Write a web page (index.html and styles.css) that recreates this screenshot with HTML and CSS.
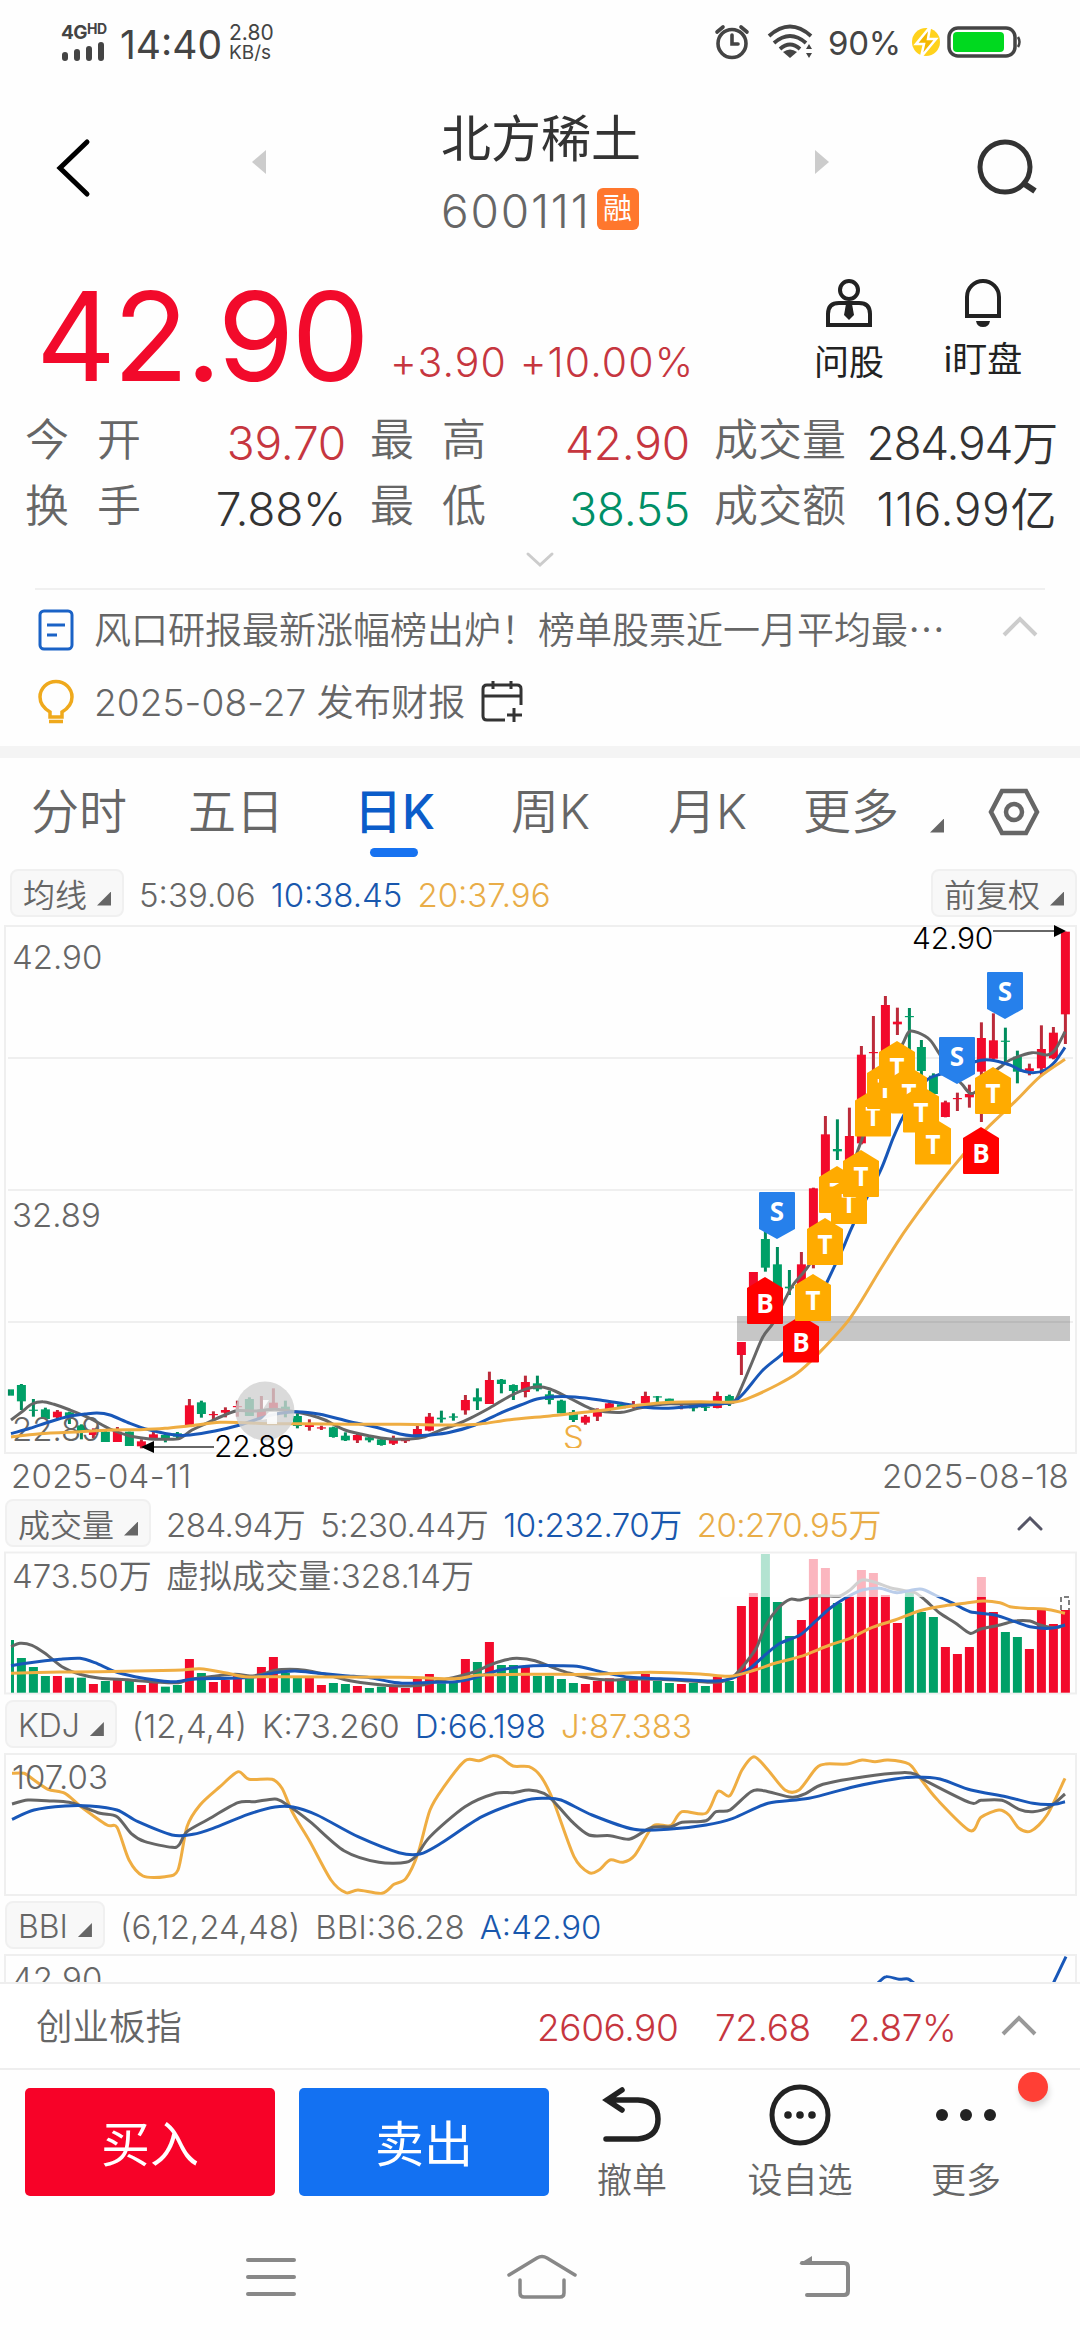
FILE: index.html
```html
<!DOCTYPE html>
<html lang="zh-CN">
<head>
    <meta charset="UTF-8">
    <meta name="viewport" content="width=device-width, initial-scale=1.0">
    <title>北方稀土 600111</title>
    <link rel="stylesheet" href="styles.css">
</head>
<body>
    <div class="status-bar">
        <div class="signal">
            <div class="network">4G<small>HD</small></div>
            <svg width="44" height="20" viewBox="0 0 44 20" stroke="#444" stroke-width="6" stroke-linecap="round"><path d="M4 13v3M16 10v6M28 7v9M40 3v13"/></svg>
        </div>
        <div class="clock">14:40</div>
        <div class="speed"><span>2.80</span><span>KB/s</span></div>
        <svg class="alarm" width="36" height="36" viewBox="0 0 36 36" fill="none" stroke="#444" stroke-width="3.6" stroke-linecap="round"><circle cx="18" cy="19.500" r="14"/><path d="M18 11v9h6M3 8l6-5M33 8l-6-5"/></svg>
        <svg class="wifi" width="48" height="36" viewBox="0 0 48 36" fill="none" stroke="#444" stroke-width="3.8"><path d="M2 12Q23-7 44 12M7 19q16-14 32 0M13 25q10-9 20 0"/><path d="M23 34l-7-6q7-5 14 0z" fill="#444" stroke="none"/><path d="M39 25l3-5 3 5zM39 29h6l-3 5z" fill="#444" stroke="none"/></svg>
        <div class="percent">90%</div>
        <svg class="bolt" width="32" height="32" viewBox="0 0 32 32"><circle cx="16" cy="16" r="14" fill="#ffd21c"/><path d="M20 1L6 18h8l-3 13 15-18h-8z" fill="#f5b800" stroke="#fff" stroke-width="2.500"/></svg>
        <svg class="battery" width="74" height="32" viewBox="0 0 74 32"><rect x="2" y="2" width="66" height="28" rx="9" fill="#fff" stroke="#444" stroke-width="3.500"/><rect x="6" y="6" width="51" height="20" rx="4" fill="#00d91f"/><path d="M71 11q3 5 0 10" fill="none" stroke="#444" stroke-width="2.500"/></svg>
    </div>

    <div class="header">
        <svg class="back" width="36" height="62" viewBox="0 0 36 62" fill="none" stroke="#000" stroke-width="5" stroke-linecap="round"><path d="M32 5L5 31l27 26"/></svg>
        <svg class="prev" width="14" height="24" viewBox="0 0 14 24" fill="#ccc"><path d="M14 0v24L0 12z"/></svg>
        <div class="stock">
            <div class="stock-name">北方稀土</div>
            <div class="stock-code">600111<span class="margin-tag">融</span></div>
        </div>
        <svg class="next" width="14" height="24" viewBox="0 0 14 24" fill="#ccc"><path d="M0 0v24l14-12z"/></svg>
        <svg class="search" width="62" height="58" viewBox="0 0 62 58" fill="none" stroke="#333" stroke-width="5"><circle cx="28" cy="28" r="25"/><path d="M46 44l12 8" stroke-width="6"/></svg>
    </div>

    <div class="quote">
        <div class="price">42.90</div>
        <div class="change">+3.90 +10.00%</div>
        <div class="action ask">
            <svg width="48" height="50" viewBox="0 0 48 50" fill="none" stroke="#222" stroke-width="4"><circle cx="24" cy="12" r="9"/><path d="M3 47V36q0-11 11-11h20q11 0 11 11v11z"/><path d="M21 26h6l2 11-5 5-5-5z" fill="#222" stroke="none"/></svg>
            <span>问股</span>
        </div>
        <div class="action watch">
            <svg width="40" height="50" viewBox="0 0 40 50" fill="none" stroke="#222" stroke-width="4"><path d="M4 38V19a16 16 0 0 1 32 0v19z"/><path d="M13 43h14q-1 6-7 6t-7-6z" fill="#222" stroke="none"/></svg>
            <span>i盯盘</span>
        </div>
    </div>

    <div class="stats">
        <div class="stat"><span class="label spaced">今开</span><span class="value up">39.70</span></div>
        <div class="stat"><span class="label spaced">最高</span><span class="value up">42.90</span></div>
        <div class="stat"><span class="label">成交量</span><span class="value volume">284.94万</span></div>
        <div class="stat"><span class="label spaced">换手</span><span class="value">7.88%</span></div>
        <div class="stat"><span class="label spaced">最低</span><span class="value down">38.55</span></div>
        <div class="stat"><span class="label">成交额</span><span class="value turnover">116.99亿</span></div>
    </div>
    <div class="expand">
        <svg width="30" height="18" viewBox="0 0 30 18" fill="none" stroke="#ccc" stroke-width="3" stroke-linecap="round"><path d="M3 3l12 11L27 3"/></svg>
    </div>

    <div class="news">
        <div class="news-row">
            <svg width="36" height="42" viewBox="0 0 36 42" fill="none" stroke="#1a62c6" stroke-width="3"><rect x="2" y="2" width="32" height="38" rx="4"/><path d="M9 16h18M9 26h10"/></svg>
            <span class="news-text">风口研报最新涨幅榜出炉！榜单股票近一月平均最⋯</span>
            <svg class="collapse" width="36" height="22" viewBox="0 0 36 22" fill="none" stroke="#ccc" stroke-width="4"><path d="M2 20L18 4l16 16"/></svg>
        </div>
        <div class="news-row">
            <svg width="36" height="44" viewBox="0 0 36 44" fill="none" stroke="#efa91c" stroke-width="3.500"><path d="M12 37v-5Q2 26 2 17a16 15.500 0 0 1 32 0q0 9-10 15v5zM11 41.500h14"/></svg>
            <span class="news-date">2025-08-27 发布财报</span>
            <svg class="calendar" width="42" height="42" viewBox="0 0 42 42" fill="none" stroke="#333" stroke-width="3"><path d="M24 39H6q-4 0-4-4V8q0-4 4-4h30q4 0 4 4v16M2 15h38M12 0v8M30 0v8M33 27v14M26 34h15"/></svg>
        </div>
    </div>

    <div class="tabs">
        <span class="tab">分时</span>
        <span class="tab">五日</span>
        <span class="tab active">日K</span>
        <span class="tab">周K</span>
        <span class="tab">月K</span>
        <span class="tab more">更多</span>
        <i class="corner"></i>
        <svg width="52" height="48" viewBox="0 0 52 48" fill="none" stroke="#666" stroke-width="4.500"><path d="M14 3h24l11 21-11 21H14L3 24z"/><circle cx="26" cy="24" r="8"/></svg>
    </div>

    <div class="legend ma">
        <span class="pill">均线<i class="corner"></i></span>
        <span>5:39.06</span><span class="blue">10:38.45</span><span class="gold">20:37.96</span>
        <span class="pill right">前复权<i class="corner"></i></span>
    </div>
    <svg id="kline" width="1080" height="530" viewBox="0 925 1080 530"></svg>
    <div class="dates"><span>2025-04-11</span><span>2025-08-18</span></div>

    <div class="legend vol">
        <span class="pill">成交量<i class="corner"></i></span>
        <span>284.94万</span><span>5:230.44万</span><span class="blue">10:232.70万</span><span class="gold">20:270.95万</span>
        <svg class="fold" width="26" height="15" viewBox="0 0 26 15" fill="none" stroke="#556" stroke-width="3" stroke-linecap="round"><path d="M2 13L13 2l11 11"/></svg>
    </div>
    <svg id="volume" width="1080" height="144" viewBox="0 1551 1080 144"></svg>

    <div class="legend kdj-legend">
        <span class="pill">KDJ<i class="corner"></i></span>
        <span>(12,4,4)</span><span>K:73.260</span><span class="blue">D:66.198</span><span class="gold">J:87.383</span>
    </div>
    <svg id="kdj" width="1080" height="144" viewBox="0 1752 1080 144"></svg>

    <div class="legend bbi-legend">
        <span class="pill">BBI<i class="corner"></i></span>
        <span>(6,12,24,48)</span><span>BBI:36.28</span><span class="blue">A:42.90</span>
    </div>
    <svg id="bbi" width="1080" height="29" viewBox="0 1953 1080 29"></svg>

    <div class="index-bar">
        <span class="index-name">创业板指</span>
        <span class="up">2606.90</span>
        <span class="up">72.68</span>
        <span class="up">2.87%</span>
        <svg width="36" height="22" viewBox="0 0 36 22" fill="none" stroke="#999" stroke-width="4"><path d="M2 20L18 4l16 16"/></svg>
    </div>

    <div class="trade-bar">
        <button class="buy">买入</button>
        <button class="sell">卖出</button>
        <div class="tool cancel">
            <svg width="60" height="60" viewBox="0 0 60 60" fill="none" stroke="#222" stroke-width="5.500" stroke-linecap="round"><path d="M4 54h32q20-2 20-20T36 15H5M20 5L5 15l15 10"/></svg>
            <span>撤单</span>
        </div>
        <div class="tool favorite">
            <svg width="62" height="62" viewBox="0 0 62 62"><circle cx="31" cy="31" r="28" fill="none" stroke="#222" stroke-width="5"/><g fill="#222"><circle cx="19" cy="31" r="3.800"/><circle cx="31" cy="31" r="3.800"/><circle cx="43" cy="31" r="3.800"/></g></svg>
            <span>设自选</span>
        </div>
        <div class="tool others">
            <svg width="62" height="62" viewBox="0 0 62 62" fill="#222"><circle cx="7" cy="31" r="6"/><circle cx="31" cy="31" r="6"/><circle cx="55" cy="31" r="6"/></svg>
            <span>更多</span>
            <i class="badge"></i>
        </div>
    </div>

    <div class="nav-bar">
        <svg width="52" height="46" viewBox="0 0 52 46" stroke="#888" stroke-width="4" stroke-linecap="round"><path d="M3 6h46M3 23h46M3 40h46"/></svg>
        <svg width="72" height="46" viewBox="0 0 72 46" fill="none" stroke="#888" stroke-width="3.500" stroke-linecap="round"><path d="M3 21L31 4q5-3 10 0l28 17M14 26v13q0 4 4 4h36q4 0 4-4V26"/></svg>
        <svg width="54" height="46" viewBox="0 0 54 46" fill="none" stroke="#888" stroke-width="4" stroke-linecap="round"><path d="M10 41h37q4 0 4-4V13q0-4-4-4H5"/><path d="M2 10L15 2v9z" fill="#888" stroke="none"/></svg>
    </div>

    <script src="chart.js"></script>
</body>
</html>
```
FILE: styles.css
```css
* {
    box-sizing: border-box;
}

body {
    margin: 0;
    width: 1080px;
    height: 2340px;
    overflow: hidden;
    background: #fefefe;
    color: #666;
    font-family: Inter, "Noto Sans CJK SC", sans-serif;
    font-weight: 350;
    line-height: 1;
    white-space: nowrap;
}

svg {
    display: block;
    flex: none;
    overflow: visible;
}

.up { color: #c6363f; }
.down { color: #008f66; }
.blue { color: #1857ad; }
.gold { color: #e9ad48; }

/* status bar */
.status-bar {
    height: 84px;
    display: flex;
    align-items: center;
    padding-left: 61px;
    color: #444;
    font-weight: 400;
}

.signal {
    width: 59px;
}

.network {
    font-size: 19px;
    font-weight: 700;
    letter-spacing: -0.5px;
}

.network small {
    font-size: 14px;
    vertical-align: 5px;
}

.clock {
    width: 109px;
    padding-top: 4px;
    font-size: 39px;
}

.speed {
    width: 485px;
    display: flex;
    flex-direction: column;
    font-size: 21px;
}

.speed span:last-child {
    font-size: 19px;
}

.wifi { margin-left: 17px; }

.percent {
    width: 82px;
    margin-left: 13px;
    padding-top: 2px;
    font-size: 33px;
    letter-spacing: -0.3px;
}

.battery { margin-left: 5px; }

/* title */
.header {
    height: 176px;
    display: flex;
    align-items: center;
    padding: 0 42px 8px 55px;
}

.prev { margin: -12px 175px 0 161px; }
.next { margin: -12px 148px 0 175px; }

.stock {
    width: 199px;
    text-align: center;
}

.stock-name {
    font-size: 50px;
    color: #333;
    font-weight: 400;
    margin: 12px 0 24px;
}

.stock-code {
    display: flex;
    align-items: center;
    gap: 6px;
    font-size: 46px;
    letter-spacing: 1.8px;
}

.margin-tag {
    width: 42px;
    height: 42px;
    flex: none;
    margin-top: -4px;
    border-radius: 6px;
    background: #ff772d;
    color: #fff;
    font-size: 29px;
    font-weight: 400;
    line-height: 42px;
    letter-spacing: 0;
}

/* quote */
.quote {
    height: 145px;
    display: flex;
    padding-left: 36px;
}

.price {
    width: 354px;
    padding-top: 14px;
    font-size: 124px;
    letter-spacing: -3px;
    font-weight: 400;
    color: #f20a2b;
}

.change {
    width: 419px;
    padding-top: 82px;
    font-size: 41px;
    letter-spacing: 1.1px;
    color: #c6363f;
}

.action {
    display: flex;
    flex-direction: column;
    align-items: center;
    width: 80px;
    padding-top: 18px;
    font-size: 35px;
    font-weight: 400;
    color: #222;
}

.action span { margin-top: 17px; }
.watch { margin-left: 54px; }
.watch span { margin-top: 14px; }

.stats {
    display: grid;
    grid-template-columns: 321px 320px 343px;
    column-gap: 24px;
    padding: 0 25px;
}

.stat {
    height: 66px;
    display: flex;
    justify-content: space-between;
    align-items: center;
}

.label {
    font-size: 44px;
    padding-top: 3px;
}

.spaced { letter-spacing: 28px; }

.value {
    font-size: 46px;
    letter-spacing: -0.2px;
    padding-top: 10px;
}

.volume { letter-spacing: -1.2px; }
.turnover { letter-spacing: 0.6px; }
.value:not(.up):not(.down) { color: #333; }

.expand {
    height: 51px;
    display: flex;
    justify-content: center;
    padding-top: 14px;
}

/* news */
.news {
    margin: 0 35px;
    height: 158px;
    border-top: 2px solid #f0f0f0;
    padding: 4px 7px 0 3px;
    font-size: 37px;
}

.news-row {
    height: 72px;
    display: flex;
    align-items: center;
}

.news-row > svg:first-child { margin-right: 20px; }
.collapse { margin: -8px 0 0 auto; }
.news-date { letter-spacing: 0.1px; }
.calendar { margin-left: 16px; }

/* period tabs */
.tabs {
    height: 123px;
    border-top: 12px solid #f4f4f4;
    display: flex;
    align-items: center;
    padding: 0 36px 4px 31px;
    font-size: 48px;
}

.tab {
    width: 157px;
}

.tab.active {
    position: relative;
    color: #0b5cc9;
    font-weight: 500;
    width: 156px;
    padding-left: 9px;
}

.tab.active::after {
    content: "";
    position: absolute;
    left: 25px;
    top: 60px;
    width: 48px;
    height: 9px;
    border-radius: 5px;
    background: #1772f0;
}

.tab.more { width: 119px; margin-left: -12px; }
.tab:nth-child(4) { padding-left: 10px; }
.tab:nth-child(5) { padding-left: 10px; }

.corner {
    display: inline-block;
    width: 14px;
    height: 14px;
    background: #666;
    clip-path: polygon(100% 0, 100% 100%, 0 100%);
}

.tabs .corner { margin: 28px 44px 0 8px; }

/* indicator rows */
.legend {
    display: flex;
    align-items: center;
    gap: 15px;
    padding: 0 0 0 5px;
    font-size: 33px;
    letter-spacing: 0;
}

.legend > span:not(.pill) { padding-top: 5px; }

.pill {
    height: 48px;
    display: flex;
    align-items: center;
    gap: 10px;
    padding: 5px 11px 0;
    border: 2px solid #f0f0f0;
    border-radius: 8px;
    background: #f8f8f8;
    letter-spacing: 0;
    font-size: 32px;
}

.pill .corner { margin-top: 6px; }

.ma { height: 56px; padding: 0 3px 8px 10px; }
.ma .right { margin-left: auto; }
.vol { height: 56px; letter-spacing: -0.5px; }
.vol .fold { margin-left: 121px; }
.kdj-legend { height: 57px; }
.bbi-legend { height: 57px; }

.dates {
    height: 40px;
    display: flex;
    justify-content: space-between;
    align-items: center;
    padding: 2px 11px 0;
    font-size: 33px;
    letter-spacing: 0.3px;
}

/* charts */
.frame { fill: none; stroke: #efefef; stroke-width: 2; }
.candle-up { fill: #f20a2b; }
.candle-down { fill: #00a067; }
.wick-up { fill: #bb2b3a; }
.wick-down { fill: #008c5d; }
.line { fill: none; stroke-width: 3; stroke-linejoin: round; }
.line-gray { stroke: #666; }
.line-blue { stroke: #1857b8; }
.line-gold { stroke: #efad42; }
.axis { fill: #666; font-size: 33px; letter-spacing: 0; }
.extreme { fill: #000; font-size: 30px; letter-spacing: -0.2px; }
.mark { fill: #fff; font: bold 26px "Open Sans", sans-serif; text-anchor: middle; }

#bbi { overflow: hidden; }

/* index and trade bars */
.index-bar {
    height: 88px;
    display: flex;
    align-items: center;
    border-top: 2px solid #eee;
    border-bottom: 2px solid #eee;
    padding: 2px 43px 0 36px;
    font-size: 37px;
    letter-spacing: -0.4px;
    background: #fff;
}

.index-name {
    width: 501px;
    font-size: 36.5px;
    letter-spacing: 0;
}

.index-bar .up:nth-child(2) { width: 178px; }
.index-bar .up:nth-child(3) { width: 133px; }
.index-bar svg { margin: -4px 0 0 auto; }

.trade-bar {
    height: 150px;
    display: flex;
    align-items: flex-start;
    padding: 18px 0 0 25px;
    font-size: 35px;
}

.trade-bar button {
    width: 250px;
    height: 108px;
    margin-right: 24px;
    padding: 4px 0 0;
    border: none;
    border-radius: 5px;
    background: #f70228;
    color: #fff;
    font: inherit;
    font-size: 49px;
    font-weight: 400;
}

.trade-bar .sell { background: #1371f2; }

.tool {
    position: relative;
    display: flex;
    flex-direction: column;
    align-items: center;
    width: 110px;
    margin-top: -4px;
}

.tool svg { height: 62px; }
.tool span { margin-top: 17px; }
.cancel { margin-left: 4px; }
.favorite { margin-left: 58px; }
.others { margin-left: 56px; }

.badge {
    position: absolute;
    left: 107px;
    top: -12px;
    width: 30px;
    height: 30px;
    border-radius: 50%;
    background: #ff3f35;
    box-shadow: 1px 5px 6px rgba(0, 0, 0, 0.15);
}

.nav-bar {
    height: 120px;
    display: flex;
    align-items: center;
    padding: 0 0 6px 245px;
    gap: 209px;
}

.nav-bar svg:last-child { margin-left: 10px; }
```
FILE: chart.js
```js
const STEP = 12;
const FIRST = 9.4;

// [direction, high, body top, body bottom, low], three units per pixel from the chart top
const candles = [
    [0,1393,1393,1412,1412],[0,1377,1380,1429,1455],[0,1422,1454,1457,1475],[0,1448,1453,1482,1482],
    [1,1455,1460,1477,1483],[0,1460,1462,1477,1497],[0,1498,1501,1520,1543],[1,1510,1520,1530,1540],
    [0,1512,1520,1551,1551],[1,1506,1520,1551,1551],[0,1520,1520,1563,1563],[1,1543,1549,1564,1570],
    [1,1520,1528,1543,1543],[0,1525,1530,1545,1552],[0,1521,1525,1535,1540],[1,1422,1441,1500,1500],
    [0,1427,1432,1467,1478],[1,1459,1467,1470,1483],[1,1447,1455,1463,1477],[1,1427,1443,1446,1475],
    [0,1417,1422,1473,1473],[1,1413,1457,1480,1480],[1,1390,1433,1449,1455],[0,1427,1445,1455,1477],
    [0,1465,1473,1503,1510],[1,1483,1498,1506,1517],[1,1502,1507,1510,1515],[0,1505,1507,1536,1538],
    [0,1522,1532,1546,1548],[1,1525,1530,1546,1554],[0,1533,1537,1546,1552],[0,1540,1543,1560,1562],
    [1,1532,1543,1556,1560],[1,1540,1545,1548,1554],[1,1502,1512,1530,1540],[1,1464,1475,1517,1519],
    [0,1457,1478,1483,1493],[0,1465,1474,1478,1487],[1,1410,1425,1456,1469],[0,1390,1417,1429,1455],
    [1,1340,1365,1437,1437],[0,1362,1364,1377,1405],[0,1378,1380,1398,1425],[1,1352,1371,1401,1417],
    [0,1352,1375,1393,1399],[0,1397,1408,1425,1438],[0,1424,1427,1465,1465],[0,1455,1461,1485,1491],
    [1,1470,1475,1493,1499],[1,1450,1460,1475,1488],[1,1433,1435,1455,1458],[0,1438,1438,1450,1450],
    [1,1428,1437,1445,1450],[1,1400,1413,1435,1435],[0,1413,1414,1417,1433],[0,1421,1421,1431,1431],
    [1,1429,1434,1440,1453],[0,1437,1440,1450,1459],[0,1437,1445,1448,1458],[1,1400,1413,1449,1450],
    [0,1409,1413,1435,1443],[1,1251,1251,1290,1350],[1,1041,1041,1100,1110],[0,920,942,1028,1040],
    [0,966,1018,1090,1100],[0,1035,1085,1090,1110],[1,981,1018,1080,1090],[1,788,790,1010,1030],
    [1,573,628,760,780],[0,583,672,679,705],[1,548,633,720,720],[1,363,389,655,658],
    [1,273,381,384,450],[1,213,240,390,400],[1,248,290,298,330],[0,249,273,276,380],
    [0,345,366,438,450],[0,445,452,507,520],[1,527,532,576,577],[1,503,519,521,558],
    [1,479,507,517,548],[1,292,339,440,591],[1,265,346,401,403],[0,308,347,350,415],
    [0,377,395,440,475],[1,416,430,438,451],[1,301,372,430,452],[1,306,323,400,403],
    [1,20,20,268,357]
];

const ma5 = [11,1485,22,1460,32,1437,43,1430,54,1438,70,1455,90,1480,110,1512,130,1533,150,1542,165,1543,180,1540,192,1515,210,1490,225,1470,237,1457,255,1458,275,1453,295,1460,310,1470,325,1485,345,1515,370,1533,390,1542,410,1542,425,1535,440,1516,455,1500,470,1480,490,1448,510,1413,525,1393,537,1385,550,1392,570,1420,590,1450,605,1460,622,1462,638,1450,655,1440,670,1436,700,1438,720,1436,734,1430,741,1390,753,1305,763,1235,773,1195,783,1135,793,1080,808,1025,830,920,845,800,858,675,880,500,895,400,903,355,909,320,918,323,930,345,939,385,950,440,962,478,970,505,978,495,990,450,1000,427,1010,405,1032,383,1047,390,1055,375,1065,320];
const ma10 = [11,1526,30,1510,50,1490,70,1473,85,1467,97,1464,110,1470,130,1495,150,1515,175,1530,190,1530,215,1518,240,1500,260,1480,280,1465,297,1460,320,1468,350,1490,375,1506,400,1527,412,1532,430,1530,450,1522,475,1500,500,1465,525,1435,537,1422,555,1415,575,1416,600,1425,625,1437,645,1447,665,1450,690,1445,720,1437,734,1430,745,1400,763,1335,783,1285,800,1230,815,1150,828,1065,843,970,853,900,880,740,893,640,903,575,915,520,927,465,940,448,955,440,975,410,990,405,1010,420,1020,435,1033,443,1045,435,1055,410,1065,367];
const ma20 = [11,1536,40,1526,80,1520,110,1515,140,1514,165,1510,190,1502,220,1492,245,1493,270,1496,300,1496,350,1498,400,1498,450,1500,480,1497,510,1484,550,1473,580,1463,610,1453,640,1440,670,1432,700,1430,735,1431,750,1418,777,1380,797,1345,817,1290,850,1180,880,1035,900,940,920,855,940,775,963,690,987,610,1015,530,1040,455,1065,403];

const volumes = [450,504,531,558,558,563,563,582,573,567,573,585,576,590,585,507,549,576,570,558,560,531,501,549,558,563,585,579,582,588,594,590,588,594,567,552,580,578,507,516,456,525,525,531,558,558,567,579,582,573,565,570,570,552,573,579,582,579,588,560,573,348,309,192,336,438,390,207,234,339,320,240,249,315,399,305,366,381,471,492,471,261,366,426,441,477,357,402,360];
const vol5 = [11,470,20,460,32,466,45,490,62,530,80,553,100,565,130,570,160,577,178,578,190,568,210,560,235,553,250,558,262,553,275,541,290,538,305,541,325,553,350,572,375,583,400,588,420,586,435,575,455,562,475,545,490,525,505,510,517,505,535,512,555,535,570,550,590,565,610,570,635,567,660,568,690,573,710,577,725,572,735,555,748,510,757,470,765,410,778,355,790,328,800,330,815,318,830,318,840,318,850,300,862,270,875,277,890,293,905,302,915,308,925,330,940,370,955,398,970,430,980,418,1000,405,1015,393,1030,393,1040,405,1055,413,1065,405];
const vol10 = [11,527,30,518,60,508,80,505,95,518,115,545,135,560,160,572,175,575,195,567,230,565,255,560,275,548,295,543,320,550,345,557,370,563,390,575,405,580,430,577,455,575,475,563,500,540,530,528,560,527,580,530,605,548,630,562,660,566,690,570,715,573,732,565,750,535,765,495,780,460,800,435,815,395,830,355,845,325,862,300,880,295,897,308,920,297,935,315,955,343,970,365,995,375,1015,395,1030,410,1050,415,1065,405];
const vol20 = [11,550,60,546,100,545,175,541,200,536,225,548,245,560,280,560,400,562,455,566,480,555,540,553,590,553,650,547,700,552,730,559,755,540,775,520,800,500,830,465,850,445,870,415,895,390,920,362,945,347,965,340,983,333,1000,338,1010,350,1025,355,1045,357,1065,370];

const kLine = [12,222,28,210,52,213,69,217,81,228,100,250,117,260,131,310,145,335,172,352,179,345,187,305,207,270,238,218,255,215,275,207,286,222,310,275,344,362,379,397,406,397,417,375,430,320,465,230,496,190,513,188,529,180,544,190,554,215,572,275,589,315,610,317,630,327,651,293,671,290,682,277,706,272,716,245,730,240,751,185,764,182,792,202,806,190,823,163,864,140,902,128,916,133,926,153,970,218,981,211,1002,211,1019,238,1033,245,1050,230,1065,192];
const dLine = [12,268,34,240,65,228,90,228,117,240,138,275,172,315,193,313,213,295,248,253,275,231,293,231,317,255,358,320,399,368,420,372,441,340,482,260,523,213,544,205,561,210,592,255,634,298,668,298,706,285,733,265,768,220,809,205,854,170,895,147,916,141,940,147,971,180,1006,200,1033,220,1054,223,1065,215];
const jLine = [12,130,24,130,34,150,48,178,65,190,81,230,107,285,117,292,129,390,143,438,165,440,178,420,187,290,200,225,220,170,238,125,249,148,272,148,282,175,293,250,310,335,331,450,346,488,358,480,382,490,394,463,406,445,418,370,430,240,444,170,465,92,479,92,492,77,501,83,513,108,529,110,541,140,553,210,574,380,589,428,599,420,610,390,623,397,635,375,651,295,658,284,671,286,682,245,706,250,718,184,730,197,742,120,754,80,768,120,785,180,799,180,816,115,826,102,847,102,862,90,875,95,888,90,909,102,919,140,937,208,970,302,981,262,999,240,1009,255,1019,295,1031,303,1047,255,1065,145];

// trade marks: letter, centre x, top y
const marks = [
    ["B",765,1277],["S",777,1192],["B",801,1315.5],["T",813,1274],["T",825,1218],["T",837,1166],
    ["T",849,1177],["T",861,1150],["T",873,1089.5],["T",885,1062],["T",897,1041],["T",909,1066.5],
    ["T",921,1085.5],["T",933,1117.5],["S",957,1037],["B",981,1127],["T",993,1067],["S",1005,972]
];
const markColors = { B: "#ff0000", S: "#2680eb", T: "#ffab00" };

// Smooth curve through the points
function curve(data, origin, color) {
    const p = [];
    for (let i = 0; i < data.length; i += 2) p.push([data[i], origin + data[i + 1] / 3]);
    let d = `M${p[0][0]} ${p[0][1].toFixed(1)}`;
    for (let i = 0; i < p.length - 1; i++) {
        const a = p[i - 1] || p[i], b = p[i], c = p[i + 1], e = p[i + 2] || c;
        const t = 7;
        d += `C${(b[0] + (c[0] - a[0]) / t).toFixed(1)} ${(b[1] + (c[1] - a[1]) / t).toFixed(1)} ` +
             `${(c[0] - (e[0] - b[0]) / t).toFixed(1)} ${(c[1] - (e[1] - b[1]) / t).toFixed(1)} ` +
             `${c[0]} ${c[1].toFixed(1)}`;
    }
    return `<path class="line line-${color}" d="${d}"/>`;
}

function rect(cls, x, y, w, h) {
    return `<rect class="${cls}" x="${x}" y="${y}" width="${w}" height="${h}"/>`;
}

function drawKline() {
    let s = rect("frame", 5, 926, 1071, 527);
    s += `<path class="frame" d="M8 1058H1073M8 1190H1073M8 1322H1073"/>`;
    s += `<rect x="737" y="1316" width="333" height="25" fill="#000" fill-opacity="0.22"/>`;
    s += `<text class="axis" x="12" y="969">42.90</text><text class="axis" x="12" y="1227">32.89</text>`;
    candles.forEach(([up, high, top, bottom, low], i) => {
        const x = FIRST + i * STEP;
        const dir = up ? "up" : "down";
        s += rect("wick-" + dir, x - 1.5, 925 + high / 3, 3, (low - high) / 3);
        if (i === 0) {
            s += rect("candle-" + dir, 11, 925 + top / 3, 3, (bottom - top) / 3);
        } else {
            s += rect("candle-" + dir, x - 4.5, 925 + top / 3, 9, Math.max(1.2, (bottom - top) / 3));
        }
    });
    s += `<text class="axis" x="12" y="1441">22.89</text>`;
    s += curve(ma5, 925, "gray") + curve(ma10, 925, "blue") + curve(ma20, 925, "gold");
    s += `<circle cx="265" cy="1411" r="29.500" fill="#cfcfcf" fill-opacity="0.78"/>`;
    s += `<path d="M263 1400h6l-6 9zM261 1420l8-8h8v12h-10v-5z" fill="#fff" fill-opacity="0.85"/>`;
    s += `<path d="M154 1447h60M993 931h62" stroke="#666" stroke-width="2"/>`;
    s += `<path d="M141 1447l13-6v12zM1066 931l-12-6v12z"/>`;
    s += `<text class="extreme" x="214" y="1457">22.89</text><text class="extreme" x="912" y="949">42.90</text>`;
    s += `<clipPath id="cut"><path d="M550 1420h50v28h-50z"/></clipPath>`;
    s += `<text x="563" y="1449" font-size="33" fill="#efad42" clip-path="url(#cut)">S</text>`;
    marks.forEach(([letter, x, y]) => {
        const shape = letter === "S" ? "M-18 1q0-1 1-1h34q1 0 1 1v36L0 47-18 37z" : "M-18 11L0 0l18 11v35q0 1-1 1h-34q-1 0-1-1z";
        s += `<g transform="translate(${x} ${y})"><path d="${shape}" fill="${markColors[letter]}"/>` +
             `<text class="mark" x="0" y="${letter === "S" ? 29 : 36}">${letter}</text></g>`;
    });
    document.getElementById("kline").innerHTML = s;
}

function drawVolume() {
    let s = rect("frame", 5, 1552.5, 1071, 141);
    volumes.forEach((v, i) => {
        const x = FIRST + i * STEP;
        const cls = "candle-" + (candles[i][0] ? "up" : "down");
        const y = 1490 + v / 3;
        s += i === 0 ? rect(cls, 11, y, 3, 1692.7 - y) : rect(cls, x - 4.5, y, 9, 1692.7 - y);
    });
    s += curve(vol5, 1490, "gray") + curve(vol10, 1490, "blue") + curve(vol20, 1490, "gold");
    s += `<rect x="720" y="1554" width="353" height="43" fill="#fff" fill-opacity="0.7"/>`;
    s += `<path d="M1061 1610v-13h8v13" fill="none" stroke="#555" stroke-width="1.500" stroke-dasharray="5 3"/>`;
    s += `<text class="axis" x="12" y="1588">473.50万</text><text class="axis" x="166" y="1588" textLength="308">虚拟成交量:328.14万</text>`;
    document.getElementById("volume").innerHTML = s;
}

function drawKdj() {
    let s = rect("frame", 5, 1754, 1071, 141);
    s += curve(jLine, 1730, "gold") + curve(kLine, 1730, "gray") + curve(dLine, 1730, "blue");
    s += `<text class="axis" x="12" y="1789">107.03</text>`;
    document.getElementById("kdj").innerHTML = s;
}

function drawBbi() {
    let s = rect("frame", 5, 1955, 1071, 60);
    s += `<text class="axis" x="12" y="1991">42.90</text>`;
    s += curve([877,762,886,740,899,748,908,747,915,762], 1730, "blue");
    s += curve([1052,768,1058,730,1066,680], 1730, "blue");
    document.getElementById("bbi").innerHTML = s;
}

drawKline();
drawVolume();
drawKdj();
drawBbi();
```
